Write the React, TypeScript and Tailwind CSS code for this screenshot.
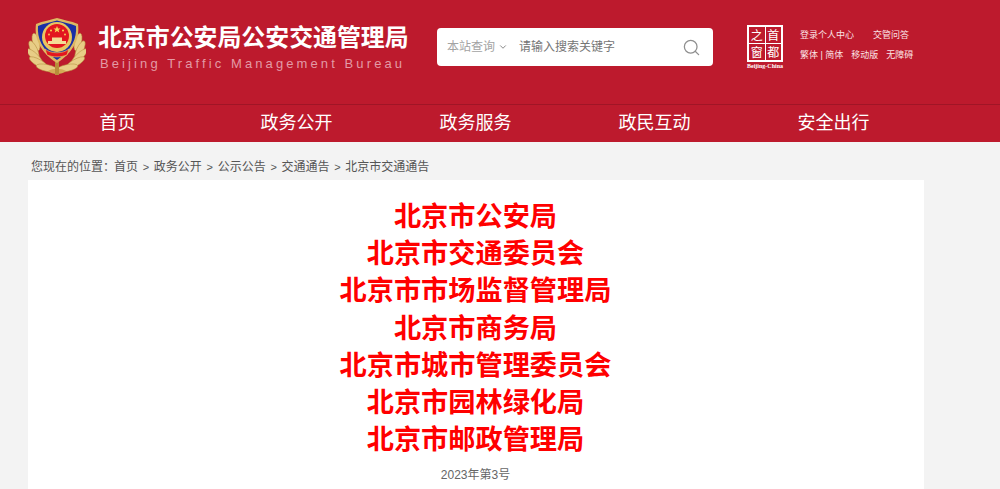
import { ChevronDown, Search } from 'lucide-react'

const NAV = ['首页', '政务公开', '政务服务', '政民互动', '安全出行']
const CRUMBS = ['首页', '政务公开', '公示公告', '交通通告', '北京市交通通告']
const AGENCIES = [
  '北京市公安局',
  '北京市交通委员会',
  '北京市市场监督管理局',
  '北京市商务局',
  '北京市城市管理委员会',
  '北京市园林绿化局',
  '北京市邮政管理局',
]
// 麦穗的叶片
const LEAVES = [
  { x: 8, y: 24, r: 75, w: 9 },
  { x: 6, y: 32, r: 65, w: 10 },
  { x: 7, y: 39, r: 45, w: 11 },
  { x: 11, y: 45, r: 30, w: 11 },
  { x: 19, y: 50, r: 12, w: 11 },
]

function Emblem() {
  return (
    <svg width="58" height="58" viewBox="0 0 58 58" className="shrink-0">
      {LEAVES.map((l) => (
        <g key={l.y}>
          <ellipse cx={l.x} cy={l.y} rx={l.w} ry="3.4" fill="#e8cd86" stroke="#b38b3c" strokeWidth=".5" transform={`rotate(${l.r} ${l.x} ${l.y})`} />
          <ellipse cx={58 - l.x} cy={l.y} rx={l.w} ry="3.4" fill="#e8cd86" stroke="#b38b3c" strokeWidth=".5" transform={`rotate(${-l.r} ${58 - l.x} ${l.y})`} />
        </g>
      ))}
      <path d="M20 53 C25 50 33 50 38 53 C34 57 24 57 20 53Z" fill="#d4ab55" />
      <path d="M27 44 L31 44 L31 57 L27 57Z" fill="#b88d3a" />
      {/* 盾 */}
      <path d="M29 0 C35 2 43 3 50 6 C52 20 46 34 29 45 C12 34 6 20 8 6 C15 3 23 2 29 0Z" fill="#dcb963" />
      <path d="M29 2.5 C35 4.5 42 5.5 48 8 C49 20 44 32 29 42 C14 32 9 20 10 8 C16 5.5 23 4.5 29 2.5Z" fill="#1a2fa6" />
      {/* 国徽 */}
      <circle cx="29" cy="19" r="15" fill="#e8c660" />
      <circle cx="29" cy="18" r="12" fill="#e3161f" />
      <path d="M29 8 l1 2.4 2.5 .1 -2 1.5 .8 2.4 -2.3 -1.4 -2.3 1.4 .8 -2.4 -2 -1.5 2.5 -.1Z" fill="#f6d95a" />
      <circle cx="23" cy="12.5" r="1" fill="#f6d95a" />
      <circle cx="35" cy="12.5" r="1" fill="#f6d95a" />
      <circle cx="21" cy="16.5" r=".9" fill="#f6d95a" />
      <circle cx="37" cy="16.5" r=".9" fill="#f6d95a" />
      <path d="M20 26 L38 26 L38 23 L34 23 L34 19.5 L24 19.5 L24 23 L20 23Z" fill="#f4dc95" />
      <path d="M17 31 C23 36 35 36 41 31 L39 37 C33 39.5 25 39.5 19 37Z" fill="#e3161f" stroke="#e8c660" strokeWidth=".7" />
    </svg>
  )
}

function CapitalLogo() {
  return (
    <div className="mt-[-3px] flex w-[50px] shrink-0 flex-col items-center">
      <div className="grid h-[37px] w-[36px] grid-cols-2 grid-rows-2 gap-px border-2 border-white bg-white font-['Noto_Sans_CJK_SC',serif] text-[12px] leading-none text-white">
        <span className="flex items-center justify-center bg-[#bd1a2d]">之</span>
        <span className="flex items-center justify-center bg-[#bd1a2d]">首</span>
        <span className="flex items-center justify-center bg-[#bd1a2d]">窗</span>
        <span className="flex items-center justify-center bg-[#bd1a2d]">都</span>
      </div>
      <span className="mt-px whitespace-nowrap font-['Liberation_Serif',serif] text-[6px] leading-[7px] font-bold text-white">
        Beijing-China
      </span>
    </div>
  )
}

export default function App() {
  return (
    <div className="h-[489px] overflow-hidden bg-[#f3f3f3] font-['Liberation_Sans','Noto_Sans_CJK_SC',sans-serif]">
      <header className="bg-[#bd1a2d]">
        <div className="flex h-[105px] items-start border-b border-[#a01526] pt-[18px] pl-[28px]">
          <Emblem />
          <div className="ml-[12px] w-[327px] pt-[5px]">
            <h1 className="text-[23.9px] leading-[30px] font-bold whitespace-nowrap text-white">北京市公安局公安交通管理局</h1>
            <p className="mt-[3px] ml-[2px] text-[13px] leading-[16px] tracking-[3.1px] whitespace-nowrap text-[#e39aa6]">
              Beijing Traffic Management Bureau
            </p>
          </div>
          <div className="mt-[10px] ml-[12px] flex h-[38px] w-[276px] items-center rounded-[4px] bg-white pr-[12px] pl-[10px]">
            <span className="text-[12px] text-[#a3a3a3]">本站查询</span>
            <ChevronDown size={10} strokeWidth={2.4} className="ml-[3px] text-[#8a8a8a]" />
            <span className="ml-[11px] flex-1 text-[12px] text-[#757575]">请输入搜索关键字</span>
            <Search size={19} strokeWidth={1.6} className="text-[#8f8f8f]" />
          </div>
          <div className="mt-[10px] ml-[27px] flex">
            <CapitalLogo />
            <div className="mt-[-3px] ml-[10px] text-[9px] leading-[20px] whitespace-nowrap text-[#fbe3e6]">
              <div className="flex gap-[19px]">
                <span>登录个人中心</span>
                <span>交管问答</span>
              </div>
              <div className="flex gap-[8px]">
                <span>繁体 | 简体</span>
                <span>移动版</span>
                <span>无障碍</span>
              </div>
            </div>
          </div>
        </div>
        <nav className="ml-[28px] grid h-[37px] w-[895px] grid-cols-5 text-center text-[18px] leading-[37px] text-white">
          {NAV.map((item) => (
            <span key={item}>{item}</span>
          ))}
        </nav>
      </header>

      <div className="flex h-[38px] items-center pt-[11px] pl-[31px] text-[12px] text-[#555]">
        <span className="mr-[-1px]">您现在的位置：</span>
        {CRUMBS.map((c, i) => (
          <span key={c} className={i === 0 ? '' : "before:mx-[4.7px] before:text-[11px] before:content-['>']"}>
            {c}
          </span>
        ))}
      </div>

      <main className="ml-[28px] h-[320px] w-[896px] bg-white pt-[18px] pr-[1px] text-center">
        {AGENCIES.map((a) => (
          <div key={a} className="text-[27.2px] leading-[37.2px] font-bold text-[#f00]">
            {a}
          </div>
        ))}
        <p className="mt-[8px] text-[12px] leading-[18px] text-[#666]">2023年第3号</p>
      </main>
    </div>
  )
}
